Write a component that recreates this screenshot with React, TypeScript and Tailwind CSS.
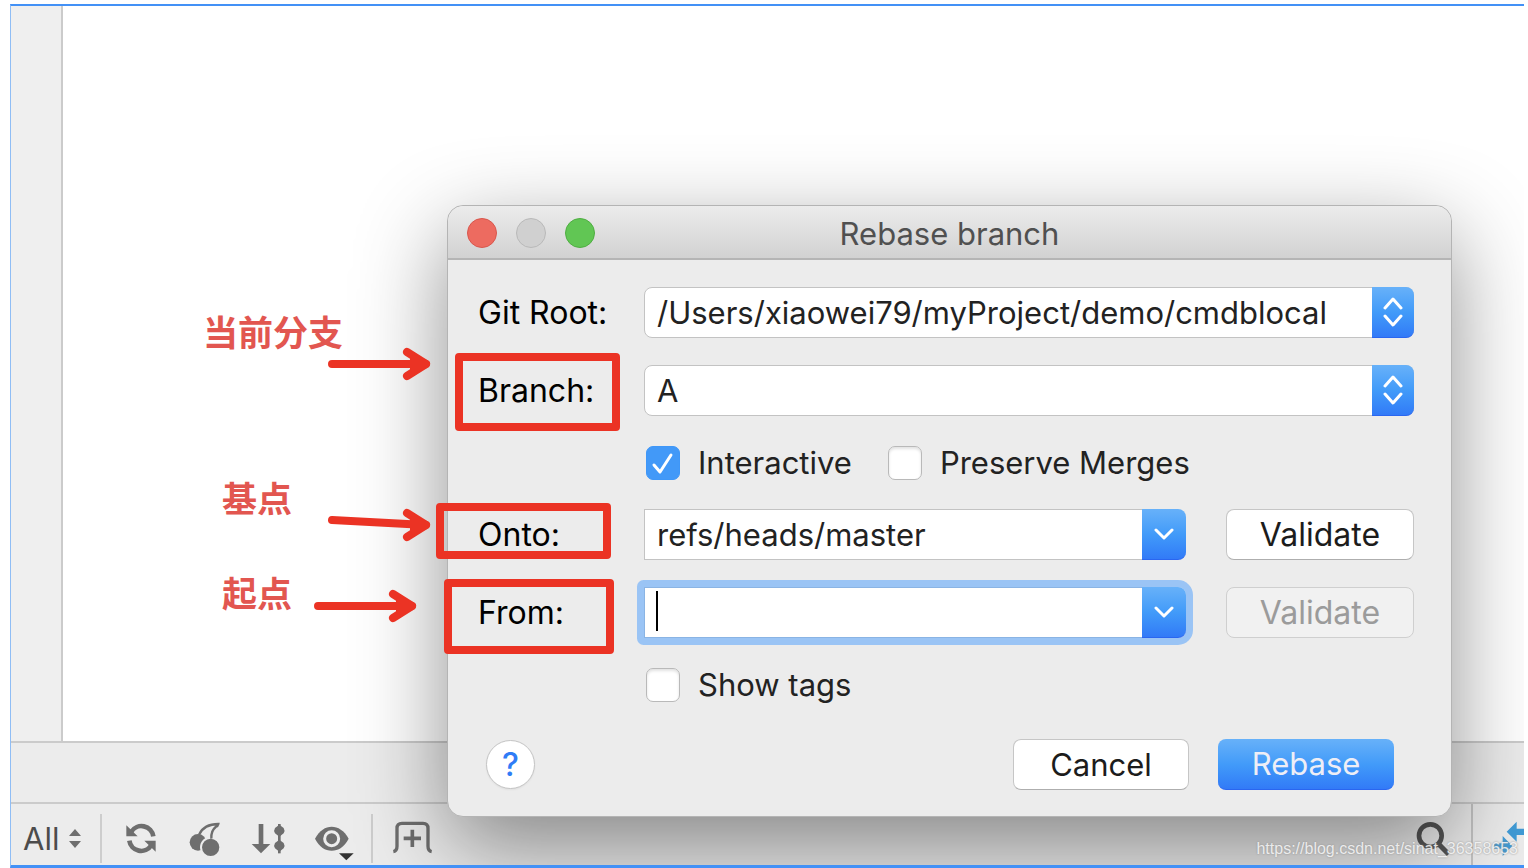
import { useState } from "react";
import type { ReactNode } from "react";
import clsx from "clsx";

const blueFill =
  "bg-linear-to-b from-[#67b1f9] via-[#429bf9] to-[#327af7] border-b border-[#2a66f0]";

const fieldLabel = "w-[166px] shrink-0 text-[32px] text-black";

function ToolIcon({ children, wide }: { children: ReactNode; wide?: boolean }) {
  return (
    <svg
      viewBox={wide ? "0 0 120 144" : "0 0 108 144"}
      className={clsx("h-12 text-[#6e6e6e]", wide ? "w-10" : "w-9")}
      fill="none"
      stroke="currentColor"
    >
      {children}
    </svg>
  );
}

function RefreshIcon() {
  return (
    <ToolIcon>
      <path d="M25 50A36 36 0 0 1 91 64M19 77A36 36 0 0 0 85 91" strokeWidth="14" />
      <path d="M10 31V64H44ZM98 77V110L64 77Z" fill="currentColor" stroke="none" />
    </ToolIcon>
  );
}

function CherryIcon() {
  return (
    <ToolIcon>
      <circle cx="33" cy="82" r="25" fill="currentColor" stroke="none" />
      <circle cx="71" cy="97" r="29" fill="currentColor" stroke="#ececec" strokeWidth="6" />
      <path
        d="M36 59C46 38 66 27 94 27C93 32 91 34 86 36C76 44 72 55 73 71"
        strokeWidth="7"
      />
    </ToolIcon>
  );
}

function SortIcon() {
  return (
    <ToolIcon>
      <path d="M30 27V90" strokeWidth="14" />
      <path d="M2 87H58L30 115Z" fill="currentColor" stroke="none" />
      <path d="M85 27V115" strokeWidth="8" />
      <path
        d="M85 29L98 39Q103 47 98 55L85 65L72 55Q67 47 72 39ZM85 74L98 84Q103 92 98 100L85 110L72 100Q67 92 72 84Z"
        fill="currentColor"
        stroke="none"
      />
    </ToolIcon>
  );
}

function EyeIcon() {
  return (
    <ToolIcon wide>
      <path
        d="M0 71C14 46 31 35 50 35S87 46 101 71C87 96 70 107 50 107S14 96 0 71Z"
        fill="currentColor"
        stroke="none"
      />
      <circle cx="50" cy="71" r="21" stroke="#ececec" strokeWidth="9" />
      <path d="M72 115H116L94 136Z" fill="#333333" stroke="none" />
    </ToolIcon>
  );
}

function NewTabIcon() {
  return (
    <ToolIcon wide>
      <path
        d="M1 110Q12 108 12 94V40Q12 25 27 25H90Q105 25 105 40V94Q105 108 116 110"
        strokeWidth="10"
      />
      <path d="M32 70H84M58 44V96" strokeWidth="11" />
    </ToolIcon>
  );
}

function ChevronDown() {
  return (
    <svg viewBox="0 0 20 12" className="h-3 w-5" fill="none" stroke="white" strokeWidth="3">
      <path d="M2 2L10 10L18 2" strokeLinecap="round" strokeLinejoin="round" />
    </svg>
  );
}

function SelectField({ id, label, value }: { id: string; label: string; value: string }) {
  return (
    <div className="flex items-center">
      <label htmlFor={id} className={fieldLabel}>
        {label}
      </label>
      <div className="relative min-w-0 flex-1">
        <select
          id={id}
          defaultValue={value}
          className="block h-[51px] w-full appearance-none rounded-lg border border-[#c3c3c3] bg-white pr-12 pl-3 text-[#222222] outline-none"
        >
          <option value={value}>{value}</option>
        </select>
        <span
          className={clsx(
            "pointer-events-none absolute inset-y-0 right-0 flex w-[42px] items-center justify-center rounded-r-lg",
            blueFill,
          )}
        >
          <svg viewBox="0 0 20 30" className="h-[30px] w-5" fill="none" stroke="white" strokeWidth="3">
            <path
              d="M2 11L10 2L18 11M2 19L10 28L18 19"
              strokeLinecap="round"
              strokeLinejoin="round"
            />
          </svg>
        </span>
      </div>
    </div>
  );
}

type ComboFieldProps = {
  id: string;
  label: string;
  initial: string;
  focused?: boolean;
};

function ComboField({ id, label, initial, focused }: ComboFieldProps) {
  const [value, setValue] = useState(initial);

  return (
    <div className="flex items-center">
      <label htmlFor={id} className={fieldLabel}>
        {label}
      </label>
      <div
        className={clsx(
          "relative flex h-[51px] min-w-0 flex-1 rounded-r-lg",
          focused && "rounded-l-xs ring-7 ring-[#9ac4f5]",
        )}
      >
        <input
          id={id}
          type="text"
          value={value}
          onChange={(e) => setValue(e.target.value)}
          className={clsx(
            "min-w-0 flex-1 border border-r-0 bg-white px-3 text-[#222222] outline-none",
            focused ? "border-[#8ab4e4]" : "border-[#c3c3c3]",
          )}
        />
        {focused && value === "" && (
          <span className="pointer-events-none absolute top-1 left-3 h-10 w-0.5 bg-black" />
        )}
        <button
          type="button"
          aria-label={`${label} list`}
          className={clsx("flex w-11 items-center justify-center rounded-r-lg", blueFill)}
        >
          <ChevronDown />
        </button>
      </div>
      <button
        type="button"
        disabled={focused}
        className={clsx(
          "ml-10 h-[51px] w-[188px] shrink-0 rounded-lg border text-[32px]",
          focused
            ? "border-[#cfcfcf] bg-[#f1f1f1] text-[#9b9b9b]"
            : "border-[#c6c6c6] border-b-[#aeaeae] bg-white text-[#1c1c1c]",
        )}
      >
        Validate
      </button>
    </div>
  );
}

function CheckBox({ label, initial = false }: { label: string; initial?: boolean }) {
  const [checked, setChecked] = useState(initial);

  return (
    <label className="flex h-[34px] items-center gap-[18px] text-[#222222]">
      <span className="relative block size-[34px]">
        <input
          type="checkbox"
          checked={checked}
          onChange={(e) => setChecked(e.target.checked)}
          className="block size-[34px] appearance-none rounded-[7px] border border-[#b9b9b9] bg-white shadow-[inset_0_2px_3px_#e2e2e2] checked:border-[#3f97f8] checked:bg-[#4299f8] checked:shadow-none"
        />
        {checked && (
          <svg
            viewBox="0 0 34 34"
            className="pointer-events-none absolute inset-0 size-full"
            fill="none"
            stroke="white"
            strokeWidth="3"
          >
            <path d="M8 19L14 26L25 9" strokeLinecap="round" strokeLinejoin="round" />
          </svg>
        )}
      </span>
      {label}
    </label>
  );
}

function RebaseDialog() {
  return (
    <section
      role="dialog"
      aria-label="Rebase branch"
      className="absolute top-[205px] right-[76px] left-[447px] rounded-2xl border border-[#b4b4b4] bg-[#ececec] shadow-[0_30px_90px_rgba(0,0,0,0.44)]"
    >
      <header className="relative flex h-[54px] items-center justify-center rounded-t-2xl border-b-2 border-[#b5b5b5] bg-linear-to-b from-[#ececec] to-[#d2d2d2] pt-1">
        <div className="absolute inset-y-0 left-[19px] flex items-center gap-[19px] pt-0.5">
          <button type="button" aria-label="Close" className="size-[30px] rounded-full border border-[#d9574d] bg-[#ed6b60]" />
          <button type="button" aria-label="Minimize" className="size-[30px] rounded-full border border-[#b9b9b9] bg-[#d0d0d0]" />
          <button type="button" aria-label="Zoom" className="size-[30px] rounded-full border border-[#4fae42] bg-[#61c654]" />
        </div>
        <h1 className="text-[#505050]">Rebase branch</h1>
      </header>

      <form className="pt-[27px] pr-[37px] pb-[26px] pl-[30px]" onSubmit={(e) => e.preventDefault()}>
        <div className="flex flex-col gap-[27px]">
          <SelectField id="git-root" label="Git Root:" value="/Users/xiaowei79/myProject/demo/cmdblocal" />
          <SelectField id="branch" label="Branch:" value="A" />
        </div>
        <div className="mt-[30px] mb-[29px] ml-[168px] flex gap-9">
          <CheckBox label="Interactive" initial />
          <CheckBox label="Preserve Merges" />
        </div>
        <div className="flex flex-col gap-[27px]">
          <ComboField id="onto" label="Onto:" initial="refs/heads/master" />
          <ComboField id="from" label="From:" initial="" focused />
        </div>
        <div className="mt-[30px] ml-[168px] flex">
          <CheckBox label="Show tags" />
        </div>
        <footer className="mt-[37px] flex items-center gap-[29px] pr-5 pl-2">
          <button
            type="button"
            aria-label="Help"
            className="mr-auto size-[49px] rounded-full border border-[#c4c4c4] bg-white text-center text-[32px] font-medium text-[#2f7cf6] shadow-xs"
          >
            ?
          </button>
          <button
            type="button"
            className="h-[51px] w-44 rounded-lg border border-[#c6c6c6] border-b-[#aeaeae] bg-white text-[#1c1c1c]"
          >
            Cancel
          </button>
          <button type="submit" className={clsx("h-[51px] w-44 rounded-lg text-[#eeeef6]", blueFill)}>
            Rebase
          </button>
        </footer>
      </form>
    </section>
  );
}

function Arrow({ className, tilt = 0 }: { className: string; tilt?: number }) {
  return (
    <svg
      viewBox="0 0 104 34"
      className={clsx("absolute h-[34px] w-[104px]", className)}
      fill="none"
      stroke="#eb3324"
      strokeWidth="8"
      strokeLinecap="round"
      strokeLinejoin="round"
    >
      <path d={`M4 ${17 - tilt}L98 17M79 5L98 17L79 29`} />
      <path d="M86 12L98 17L86 22Z" fill="#eb3324" />
    </svg>
  );
}

// Red pen marks drawn on top of the dialog
function Annotations() {
  const note =
    "absolute text-[35px] leading-10 font-bold text-[#e25650] font-['Noto_Sans_CJK_SC',sans-serif]";
  const box = "absolute rounded-sm border-8 border-[#eb3324]";

  return (
    <div className="pointer-events-none absolute inset-0">
      <p className={clsx(note, "top-[311px] left-[203px]")}>当前分支</p>
      <Arrow className="top-[347px] left-[328px]" />
      <div className={clsx(box, "top-[353px] left-[455px] h-[78px] w-[165px]")} />

      <p className={clsx(note, "top-[477px] left-[222px]")}>基点</p>
      <Arrow className="top-[508px] left-[328px]" tilt={5} />
      <div className={clsx(box, "top-[503px] left-[436px] h-14 w-[175px]")} />

      <p className={clsx(note, "top-[572px] left-[222px]")}>起点</p>
      <Arrow className="top-[589px] left-[314px]" />
      <div className={clsx(box, "top-[579px] left-[444px] h-[75px] w-[170px]")} />
    </div>
  );
}

function Toolbar() {
  return (
    <div className="flex h-[61px] bg-[#ececec]">
      <div className="flex flex-1 items-center pt-2 pl-3">
        <button type="button" className="flex items-center gap-[10px] text-[#4c4c4c]">
          All
          <svg viewBox="0 0 12 20" className="h-5 w-3" fill="#6e6e6e">
            <path d="M0 7L6 0L12 7ZM0 12H12L6 19Z" />
          </svg>
        </button>
        <span className="mr-[21px] ml-[19px] h-[49px] w-0.5 bg-[#cdcdcd]" />
        <div className="flex gap-7">
          <button type="button" aria-label="Refresh"><RefreshIcon /></button>
          <button type="button" aria-label="Cherry-pick"><CherryIcon /></button>
          <button type="button" aria-label="Sort"><SortIcon /></button>
          <button type="button" aria-label="View options"><EyeIcon /></button>
        </div>
        <span className="mr-5 ml-4 h-[49px] w-0.5 bg-[#cdcdcd]" />
        <button type="button" aria-label="New tab"><NewTabIcon /></button>
        <button type="button" aria-label="Search" className="mr-5 ml-auto">
          <ToolIcon>
            <circle cx="46" cy="62" r="34" stroke="#555555" strokeWidth="14" />
            <path d="M70 86L101 118" stroke="#555555" strokeWidth="15" />
          </ToolIcon>
        </button>
      </div>
      <div className="flex items-center border-l-2 border-[#c4c4c4] pt-2 pl-[21px]">
        <button type="button" aria-label="Collapse">
          <svg viewBox="0 0 90 144" className="h-12 w-[30px]" fill="#409bd6">
            <path d="M38 50L68 20V41H90V60H68V80Z" />
            <path d="M55 93L26 63V85H0V101H26V123Z" />
          </svg>
        </button>
      </div>
    </div>
  );
}

export default function App() {
  return (
    <div className="relative flex min-h-screen flex-col bg-white pt-1 font-[Inter,'Liberation_Sans',sans-serif] text-[31px] leading-10">
      <main className="mr-1 ml-2.5 flex flex-1 flex-col border-t-2 border-b-3 border-l border-[#4391f6] border-l-[#8fbdf5]">
        <div className="flex flex-1">
          <div className="w-[52px] border-r-2 border-[#cbcbcb] bg-[#efefef]" />
          <div className="flex-1 bg-white" />
        </div>
        <div className="h-[63px] border-y-2 border-[#cbcbcb] bg-[#ececec]" />
        <Toolbar />
      </main>

      {/* clips the dialog shadow at the frame's edges */}
      <div className="absolute top-0 right-1 bottom-[3px] left-0 overflow-hidden">
        <div className="absolute inset-y-0 -right-1 left-0">
          <RebaseDialog />
        </div>
      </div>
      <Annotations />
      <p className="absolute right-2.5 bottom-[7px] font-['Liberation_Sans',sans-serif] text-base leading-6 text-white/80 [text-shadow:0_0_2px_#888]">
        https://blog.csdn.net/sinat_36358653
      </p>
    </div>
  );
}
